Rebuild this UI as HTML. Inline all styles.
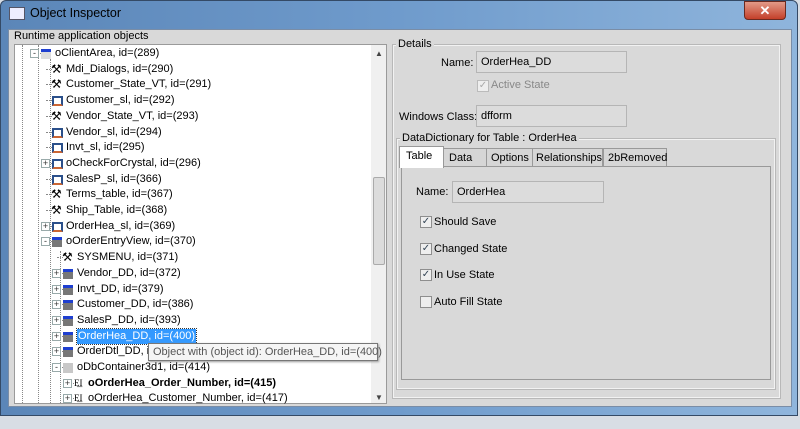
<!DOCTYPE html>
<html><head><style>
*{margin:0;padding:0;box-sizing:border-box}
body{width:800px;height:429px;overflow:hidden;background:#d8dde4;font-family:"Liberation Sans",sans-serif;font-size:11px;color:#000;position:relative}
.abs{position:absolute}
.win{left:0;top:0;width:798px;height:416px;background:linear-gradient(90deg,#5b86b8,#6f9bcc 50%,#8fb5dc);border:1px solid #344a66;border-radius:6px 6px 0 0}
.title{left:30px;top:6px;font-size:12.5px;color:#000}
.client{left:8px;top:29px;width:784px;height:378px;background:#d9d9d9;border:1px solid #7a8da6}
.tree{left:14px;top:44px;width:373px;height:360px;background:#fff;border:1px solid #9a9a9a;overflow:hidden}
.row{position:absolute;white-space:nowrap;height:15px;line-height:15px}
.ic{position:absolute;width:9px;height:9px}
.box{position:absolute;width:9px;height:9px;border:1px solid #9aa;background:#fff;font-size:9px;line-height:7px;text-align:center;color:#333}
.grp{border:1px solid #f2f2f2;outline:1px solid #b8b8b8}
.inp{position:absolute;background:#dcdcdc;border:1px solid #b5b5b5;height:22px;line-height:20px;padding-left:4px}
.cb{position:absolute;width:12px;height:12px;border:1px solid #8e8e8e;background:#eee;font-size:10px;line-height:10px;text-align:center;color:#345}
</style></head><body>
<div class="abs win"></div>
<div class="abs" style="left:9px;top:7px;width:16px;height:13px;background:#eef;border:1px solid #556"></div>
<div class="abs title">Object Inspector</div>
<div class="abs" style="left:744px;top:1px;width:42px;height:19px;background:linear-gradient(#e29a88,#c4402a);border:1px solid #6b2a20;border-radius:0 0 4px 4px;color:#fff;text-align:center;font-weight:bold;font-size:13px;line-height:18px">✕</div>
<div class="abs client"></div>
<div class="abs" style="left:14px;top:30px">Runtime application objects</div>
<div class="abs tree">
<div class="abs" style="left:7px;top:0;height:360px;border-left:1px dotted #888"></div>
<div class="abs" style="left:23px;top:0;height:360px;border-left:1px dotted #888"></div>
<div class="abs" style="left:35px;top:14px;height:346px;border-left:1px dotted #888"></div>
<div class="abs" style="left:45px;top:206px;height:154px;border-left:1px dotted #888"></div>
<div class="abs" style="left:356px;top:0;width:16px;height:360px;background:#f0f0f0"></div>
<div class="abs" style="left:358px;top:132px;width:12px;height:88px;background:#dcdcdc;border:1px solid #aaa;border-radius:2px"></div>
<div class="abs" style="left:360px;top:4px;font-size:8px;color:#444">▲</div>
<div class="abs" style="left:360px;top:348px;font-size:8px;color:#444">▼</div>
</div>
<div id="t" class="abs" style="left:14px;top:44px;width:356px;height:360px;overflow:hidden"></div>
<script>
var R=[[0,'oClientArea, id=(289)','-','w'],[1,'Mdi_Dialogs, id=(290)','','h'],[1,'Customer_State_VT, id=(291)','','h'],[1,'Customer_sl, id=(292)','','s'],[1,'Vendor_State_VT, id=(293)','','h'],[1,'Vendor_sl, id=(294)','','s'],[1,'Invt_sl, id=(295)','','s'],[1,'oCheckForCrystal, id=(296)','+','s'],[1,'SalesP_sl, id=(366)','','s'],[1,'Terms_table, id=(367)','','h'],[1,'Ship_Table, id=(368)','','h'],[1,'OrderHea_sl, id=(369)','+','s'],[1,'oOrderEntryView, id=(370)','-','g'],[2,'SYSMENU, id=(371)','','h'],[2,'Vendor_DD, id=(372)','+','d'],[2,'Invt_DD, id=(379)','+','d'],[2,'Customer_DD, id=(386)','+','d'],[2,'SalesP_DD, id=(393)','+','d'],[2,'OrderHea_DD, id=(400)','+','d'],[2,'OrderDtl_DD, id=(407)','+','d'],[2,'oDbContainer3d1, id=(414)','-','l'],[3,'oOrderHea_Order_Number, id=(415)','+','e'],[3,'oOrderHea_Customer_Number, id=(417)','+','e']];
var h='';R.forEach(function(r,i){var y=2+i*15.7;var tx=[41,52,63,74][r[0]];var ix=tx-14,bx=ix-11;
h+='<div class="abs" style="left:'+(bx+5)+'px;top:'+(y+7)+'px;width:'+(ix-bx-5)+'px;border-top:1px dotted #888"></div>';
if(r[2])h+='<div class="box" style="left:'+bx+'px;top:'+(y+3)+'px">'+r[2]+'</div>';
var ic='';if(r[3]=='h')ic='<div class="row" style="left:'+(ix-1)+'px;top:'+y+'px;font-size:12px">⚒</div>';
else if(r[3]=='s')ic='<div class="ic" style="left:'+ix+'px;top:'+(y+3)+'px;border:2px solid #2a4f8a;border-bottom-color:#c63;background:#fff;width:11px;height:10px"></div>';
else if(r[3]=='e')ic='<div class="row" style="left:'+ix+'px;top:'+y+'px;font-size:9px;font-family:Liberation Serif">E͟I</div>';
else{var c=r[3]=='w'?'#ddd':r[3]=='l'?'#c8c8c8':'#777';ic='<div class="ic" style="left:'+ix+'px;top:'+(y+3)+'px;width:10px;height:10px;background:'+c+';border-top:3px solid '+(r[3]=='l'?'#c8c8c8':'#1e3fd0')+'"></div>';}
h+=ic;
var st=i==21?'font-weight:bold;':'';
if(i==18)st+='background:#3399ff;color:#fff;outline:1px dotted #333;padding:0 1px;';
h+='<div class="row" style="left:'+tx+'px;top:'+y+'px;'+st+'">'+r[1]+'</div>';});
document.getElementById('t').innerHTML=h;
</script>
<div class="abs" style="left:148px;top:343px;width:230px;height:18px;background:#f5f5f5;border:1px solid #777;color:#555;line-height:16px;padding-left:4px;white-space:nowrap;box-shadow:1px 1px 2px #999">Object with (object id): OrderHea_DD, id=(400)</div>
<div class="abs grp" style="left:393px;top:45px;width:387px;height:353px"></div>
<div class="abs" style="left:396px;top:38px;background:#d9d9d9;padding:0 2px">Details</div>
<div class="abs" style="left:441px;top:57px">Name:</div>
<div class="inp" style="left:476px;top:51px;width:151px">OrderHea_DD</div>
<div class="cb" style="left:477px;top:80px;border-color:#bbb;color:#aaa">✓</div>
<div class="abs" style="left:491px;top:79px;color:#888">Active State</div>
<div class="abs" style="left:399px;top:111px">Windows Class:</div>
<div class="inp" style="left:476px;top:105px;width:151px">dfform</div>
<div class="abs grp" style="left:397px;top:139px;width:378px;height:250px"></div>
<div class="abs" style="left:400px;top:132px;background:#d9d9d9;padding:0 2px">DataDictionary for Table : OrderHea</div>
<div class="abs" style="left:401px;top:166px;width:370px;height:214px;border:1px solid #999;background:#d9d9d9"></div>
<div class="abs" style="left:443px;top:148px;width:44px;height:19px;border:1px solid #999;background:#d6d6d6;padding:3px 0 0 5px">Data</div>
<div class="abs" style="left:486px;top:148px;width:47px;height:19px;border:1px solid #999;background:#d6d6d6;padding:3px 0 0 4px">Options</div>
<div class="abs" style="left:532px;top:148px;width:71px;height:19px;border:1px solid #999;background:#d6d6d6;padding:3px 0 0 3px">Relationships</div>
<div class="abs" style="left:603px;top:148px;width:64px;height:19px;border:1px solid #999;background:#d6d6d6;padding:3px 0 0 4px">2bRemoved</div>
<div class="abs" style="left:399px;top:146px;width:45px;height:22px;border:1px solid #999;border-bottom:none;background:#fff;padding:3px 0 0 6px">Table</div>
<div class="abs" style="left:416px;top:186px">Name:</div>
<div class="inp" style="left:452px;top:181px;width:152px">OrderHea</div>
<div class="cb" style="left:420px;top:216px">✓</div><div class="abs" style="left:434px;top:216px">Should Save</div>
<div class="cb" style="left:420px;top:243px">✓</div><div class="abs" style="left:434px;top:243px">Changed State</div>
<div class="cb" style="left:420px;top:269px">✓</div><div class="abs" style="left:434px;top:269px">In Use State</div>
<div class="cb" style="left:420px;top:296px"></div><div class="abs" style="left:434px;top:296px">Auto Fill State</div>
</body></html>
